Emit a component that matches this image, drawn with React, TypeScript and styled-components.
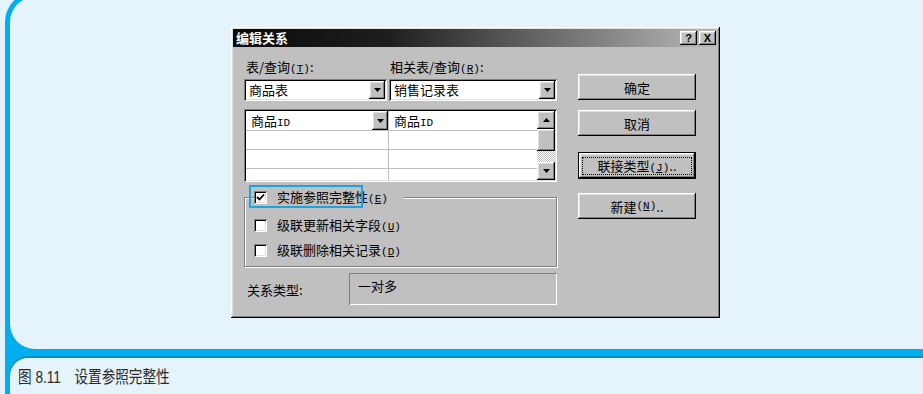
import React from 'react'
import styled, { createGlobalStyle } from 'styled-components'

const GlobalStyle = createGlobalStyle`
  html, body {
    margin: 0;
    padding: 0;
    background: #e5f3fb;
    overflow: hidden;
  }
  body {
    font-family: "Noto Sans CJK SC", sans-serif;
  }
`

const bevelUp = `
  box-shadow: inset -1px -1px #000, inset 1px 1px #fff,
    inset -2px -2px #808080, inset 2px 2px #dfdfdf;
`

const bevelDown = `
  box-shadow: inset 1px 1px #808080, inset -1px -1px #fff,
    inset 2px 2px #000, inset -2px -2px #dfdfdf;
`

const Page = styled.div`
  width: 923px;
  height: 394px;
  overflow: hidden;
`

// the frame runs off the top and right of the page, as in the scan
const Frame = styled.div`
  margin: -8px 0 0 5px;
  width: 960px;
  height: 402px;
  box-sizing: border-box;
  padding: 5px 0 0 5px;
  background: #00adef;
  border-radius: 30px 0 0 0;
  display: flex;
  flex-direction: column;
  gap: 9px;
`

const TopPanel = styled.div`
  height: 352px;
  flex: none;
  box-sizing: border-box;
  padding: 30px 0 0 221px;
  background: #e5f3fb;
  border-radius: 25px 0 25px 25px;
`

const CaptionPanel = styled.div`
  flex: 1;
  box-sizing: border-box;
  padding: 6px 0 0 8px;
  background: #e5f3fb;
  border-radius: 18px 18px 0 0;
  box-shadow: 0 -2px 0 #0b8fc4;
`

const CaptionText = styled.span`
  display: inline-block;
  font: 17px "Liberation Sans", "Noto Sans CJK SC", sans-serif;
  line-height: 24px;
  color: #2b2b2b;
  white-space: pre;
  transform: scaleX(0.8);
  transform-origin: left center;
`

const Dialog = styled.div`
  width: 489px;
  height: 291px;
  box-sizing: border-box;
  padding: 2px;
  background: #c0c0c0;
  ${bevelUp}
  display: flex;
  flex-direction: column;
  font: 13px "Noto Sans CJK SC", sans-serif;
  color: #000;
`

const TitleBar = styled.div`
  height: 18px;
  flex: none;
  display: flex;
  align-items: center;
  justify-content: space-between;
  padding: 0 2px 0 3px;
  background: linear-gradient(90deg, #0a0a0a 0%, #1e1e1e 32%, #bababa 100%);
`

const Title = styled.span`
  color: #fff;
  font-weight: 700;
  font-size: 13px;
  line-height: 18px;
`

const TitleButtons = styled.div`
  display: flex;
  gap: 2px;
`

const TitleButton = styled.div`
  width: 17px;
  height: 14px;
  display: flex;
  align-items: center;
  justify-content: center;
  background: #c0c0c0;
  ${bevelUp}
  font: 700 11px "Liberation Sans", sans-serif;
`

const Body = styled.div`
  display: flex;
  gap: 21px;
  padding: 12px 0 0 11px;
`

const LeftColumn = styled.div`
  width: 313px;
  display: flex;
  flex-direction: column;
`

const LabelRow = styled.div`
  display: grid;
  grid-template-columns: 144px 1fr;
  height: 16px;
  line-height: 16px;
  padding-left: 2px;
`

const Latin = styled.span`
  font: 11px "Liberation Mono", monospace;
`

const ComboRow = styled.div`
  display: flex;
  gap: 2px;
  height: 22px;
  margin-top: 4px;
`

const Combo = styled.div<{ $width?: number }>`
  ${({ $width }) => ($width ? `width: ${$width}px;` : 'flex: 1;')}
  box-sizing: border-box;
  padding: 2px;
  display: flex;
  align-items: center;
  background: #fff;
  ${bevelDown}
`

const ComboText = styled.span`
  flex: 1;
  padding-left: 3px;
  line-height: 18px;
`

const DropButton = styled.div<{ $h?: number }>`
  width: 16px;
  height: ${({ $h }) => $h ?? 18}px;
  flex: none;
  display: flex;
  align-items: center;
  justify-content: center;
  background: #c0c0c0;
  ${bevelUp}
`

const GridBox = styled.div`
  display: flex;
  height: 73px;
  margin-top: 8px;
  box-sizing: border-box;
  padding: 2px;
  background: #fff;
  ${bevelDown}
`

const Cells = styled.div`
  flex: 1;
  display: grid;
  grid-template-columns: 142px 1fr;
  grid-template-rows: 19px 18px 18px 1fr;
  gap: 1px;
  background: #c0c0c0;
`

const Cell = styled.div`
  display: flex;
  align-items: center;
  background: #fff;
  padding-left: 2px;
  line-height: 18px;
`

const ScrollBar = styled.div`
  width: 18px;
  display: flex;
  flex-direction: column;
  background: #c0c0c0;
`

const ScrollButton = styled.div<{ $h: number }>`
  height: ${({ $h }) => $h}px;
  flex: none;
  display: flex;
  align-items: center;
  justify-content: center;
  background: #c0c0c0;
  ${bevelUp}
`

const ScrollTrack = styled.div`
  flex: 1;
  background: repeating-conic-gradient(#fff 0 25%, #c0c0c0 0 50%) 0 0 / 2px 2px;
`

const GroupBox = styled.fieldset`
  margin: 6px 0 0;
  padding: 10px 0 7px 9px;
  min-width: 0;
  border: 1px solid #808080;
  box-shadow: 1px 1px 0 #fff, inset 1px 1px 0 #fff;
  display: flex;
  flex-direction: column;
  gap: 7px;
`

const Legend = styled.legend`
  position: relative;
  padding: 0 16px 0 0;
  background: #c0c0c0;
`

const Highlight = styled.div`
  position: absolute;
  left: -5px;
  top: -3px;
  width: 110px;
  height: 19px;
  border: 2px solid #1ba3e2;
`

const CheckRow = styled.div`
  display: flex;
  align-items: center;
  gap: 10px;
  height: 18px;
  line-height: 18px;
`

const Box = styled.div`
  width: 13px;
  height: 13px;
  flex: none;
  display: flex;
  align-items: center;
  justify-content: center;
  background: #fff;
  ${bevelDown}
`

const RelRow = styled.div`
  display: flex;
  align-items: center;
  margin-top: 6px;
  height: 32px;
`

const RelLabel = styled.span`
  width: 105px;
  padding-left: 3px;
  box-sizing: border-box;
`

const RelValue = styled.div`
  flex: 1;
  height: 32px;
  box-sizing: border-box;
  padding: 4px 9px;
  line-height: 18px;
  box-shadow: inset 1px 1px #808080, inset -1px -1px #fff;
`

const RightColumn = styled.div`
  width: 118px;
  padding-top: 3px;
  display: flex;
  flex-direction: column;
`

const PushButton = styled.div<{ $gap: number; $default?: boolean }>`
  height: ${({ $default }) => ($default ? 27 : 26)}px;
  margin-top: ${({ $gap }) => $gap}px;
  box-sizing: border-box;
  display: flex;
  align-items: center;
  justify-content: center;
  background: #c0c0c0;
  ${bevelUp}
  ${({ $default }) => ($default ? 'border: 1px solid #000;' : '')}
`

const FocusRing = styled.span`
  flex: 1;
  margin: 0 4px;
  text-align: center;
  line-height: 15px;
  outline: 1px dotted #000;
`

const Arrow = ({ up = false }: { up?: boolean }) => (
  <svg width="7" height="4" viewBox="0 0 7 4">
    <polygon points={up ? '0,4 7,4 3.5,0' : '0,0 7,0 3.5,4'} fill="#000" />
  </svg>
)

const Check = () => (
  <svg width="9" height="9" viewBox="0 0 9 9">
    <polyline points="1,4 3.5,6.5 8,1.5" fill="none" stroke="#000" strokeWidth="1.8" />
  </svg>
)

const Key = ({ k }: { k: string }) => (
  <Latin>
    (<u>{k}</u>)
  </Latin>
)

const App = () => {
  return (
    <Page>
      <GlobalStyle />
      <Frame>
        <TopPanel>
          <Dialog>
            <TitleBar>
              <Title>编辑关系</Title>
              <TitleButtons>
                <TitleButton>?</TitleButton>
                <TitleButton>X</TitleButton>
              </TitleButtons>
            </TitleBar>
            <Body>
              <LeftColumn>
                <LabelRow>
                  <span>
                    表/查询<Key k="T" />:
                  </span>
                  <span>
                    相关表/查询<Key k="R" />:
                  </span>
                </LabelRow>
                <ComboRow>
                  <Combo $width={143}>
                    <ComboText>商品表</ComboText>
                    <DropButton>
                      <Arrow />
                    </DropButton>
                  </Combo>
                  <Combo>
                    <ComboText>销售记录表</ComboText>
                    <DropButton>
                      <Arrow />
                    </DropButton>
                  </Combo>
                </ComboRow>
                <GridBox>
                  <Cells>
                    <Cell>
                      <ComboText>
                        商品<Latin>ID</Latin>
                      </ComboText>
                      <DropButton $h={19}>
                        <Arrow />
                      </DropButton>
                    </Cell>
                    <Cell>
                      <ComboText>
                        商品<Latin>ID</Latin>
                      </ComboText>
                    </Cell>
                    <Cell />
                    <Cell />
                    <Cell />
                    <Cell />
                    <Cell />
                    <Cell />
                  </Cells>
                  <ScrollBar>
                    <ScrollButton $h={18}>
                      <Arrow up />
                    </ScrollButton>
                    <ScrollButton $h={22} />
                    <ScrollTrack />
                    <ScrollButton $h={18}>
                      <Arrow />
                    </ScrollButton>
                  </ScrollBar>
                </GridBox>
                <GroupBox>
                  <Legend>
                    <CheckRow>
                      <Box>
                        <Check />
                      </Box>
                      <span>
                        实施参照完整性<Key k="E" />
                      </span>
                    </CheckRow>
                    <Highlight />
                  </Legend>
                  <CheckRow>
                    <Box />
                    <span>
                      级联更新相关字段<Key k="U" />
                    </span>
                  </CheckRow>
                  <CheckRow>
                    <Box />
                    <span>
                      级联删除相关记录<Key k="D" />
                    </span>
                  </CheckRow>
                </GroupBox>
                <RelRow>
                  <RelLabel>关系类型:</RelLabel>
                  <RelValue>一对多</RelValue>
                </RelRow>
              </LeftColumn>
              <RightColumn>
                <PushButton $gap={12}>确定</PushButton>
                <PushButton $gap={10}>取消</PushButton>
                <PushButton $gap={16} $default>
                  <FocusRing>
                    联接类型<Key k="J" />..
                  </FocusRing>
                </PushButton>
                <PushButton $gap={14}>
                  新建<Key k="N" />..
                </PushButton>
              </RightColumn>
            </Body>
          </Dialog>
        </TopPanel>
        <CaptionPanel>
          <CaptionText>图 8.11　设置参照完整性</CaptionText>
        </CaptionPanel>
      </Frame>
    </Page>
  )
}

export default App
